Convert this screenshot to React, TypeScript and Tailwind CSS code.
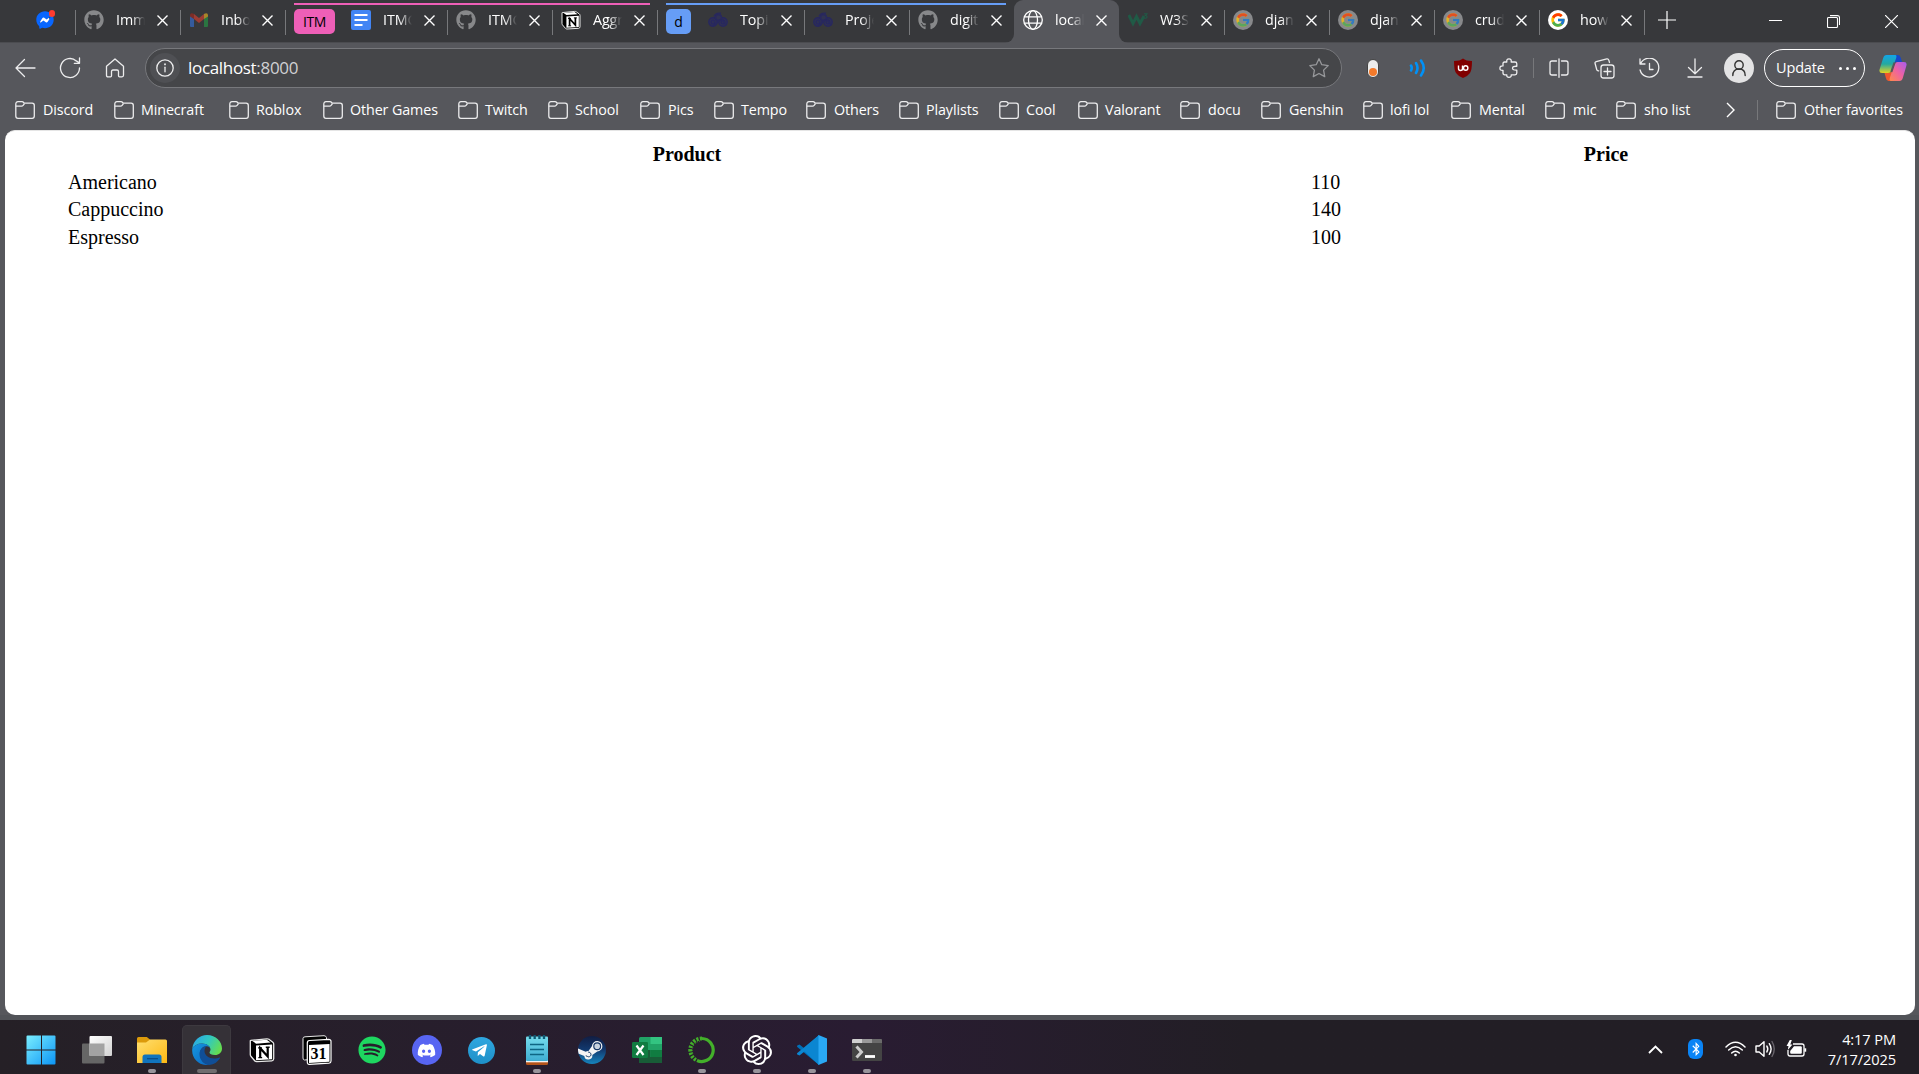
import React from "react";
import {
  FaGithub,
  FaFacebookMessenger,
  FaSpotify,
  FaDiscord,
  FaTelegramPlane,
  FaBluetoothB,
} from "react-icons/fa";
import { FcGoogle } from "react-icons/fc";
import { SiOpenai } from "react-icons/si";

type P = { children?: React.ReactNode };

function Line({ children, w = 20, vb = "0 0 20 20", sw = 1.3 }: P & { w?: number; vb?: string; sw?: number }) {
  return (
    <svg width={w} height={w} viewBox={vb} fill="none" stroke="currentColor" strokeWidth={sw} strokeLinecap="round" strokeLinejoin="round">
      {children}
    </svg>
  );
}

function NotionCube({ size }: { size: number }) {
  return (
    <svg width={size} height={size} viewBox="0 0 20 20">
      <path d="M1.200 2.600 13.700 1.400Q14.600 1.300 15.300 1.800L18.300 4Q19 4.500 19 5.400V16.800Q19 18.200 17.600 18.300L6 19Q5 19 4.400 18.300L1.600 15Q1 14.300 1 13.400V3Q1 2.600 1.200 2.600Z" fill="#000" stroke="#e9e9e9" strokeWidth="1" />
      <path d="M2.600 3 13.600 2.100 16.600 4.200 5.400 5.100Z" fill="#fff" />
      <path d="M5.400 6.500 17.800 5.700V17.100L5.400 17.800Z" fill="#fff" />
      <path d="M8.600 15.800V8.600L14.400 15V7.800" fill="none" stroke="#000" strokeWidth="1.700" />
      <path d="M7 8.400h3M12.900 7.900h3M7.200 15.800h2.900" stroke="#000" strokeWidth="1" />
    </svg>
  );
}

function DocsIcon() {
  return (
    <svg width="20" height="20" viewBox="0 0 20 20">
      <rect width="20" height="20" rx="2" fill="#4285f4" />
      <path d="M3.500 5h13M3.500 10h13M3.500 15h8" stroke="#fff" strokeWidth="2" />
    </svg>
  );
}

function GmailIcon() {
  return (
    <svg width="20" height="20" viewBox="0 0 20 20">
      <path d="M1 5.500V16Q1 17 2 17h3V8.500z" fill="#355b9d" />
      <path d="M19 5.500V16q0 1-1 1h-3V8.500z" fill="#2b7541" />
      <path d="M5 9V4l5 4 5-4v5l-5 4z" fill="#9c3c34" />
      <path d="M1 6.500V5q.3-2.500 3-1.500L5 4v5z" fill="#7c2d27" />
      <path d="M19 6.500V5q-.3-2.500-3-1.500L15 4v5z" fill="#a8852a" />
    </svg>
  );
}

function CloudKnot() {
  return (
    <svg width="20" height="20" viewBox="0 0 20 20" fill="none" stroke="#28285f" strokeWidth="1.400">
      <circle cx="5" cy="12" r="4.200" fill="#303153" />
      <circle cx="15" cy="12" r="4.200" fill="#303153" />
      <circle cx="5" cy="12" r="1.800" />
      <circle cx="15" cy="12" r="1.800" />
      <circle cx="10.500" cy="7.500" r="3" fill="#303153" />
      <path d="M2 15.500q4 1 8-4t8 4M6 6.500Q7.500 2.500 13 3.300" />
    </svg>
  );
}

function GlobeIcon() {
  return (
    <Line>
      <circle cx="10" cy="10" r="9.300" />
      <ellipse cx="10" cy="10" rx="4.500" ry="9.300" />
      <path d="M1.500 6.800h17M1.500 13.200h17" />
    </Line>
  );
}

function W3Icon() {
  return (
    <svg width="20" height="20" viewBox="0 0 20 20" fill="none" stroke="#205a46">
      <path d="M.8 5 5 13.500 8.500 6.500 12 13.500 16 6" strokeWidth="3" />
      <path d="M16 3.800h3l-1.700 1.700q2 .2 1.700 1.800-.6 1.400-3 .8" strokeWidth="1.100" />
    </svg>
  );
}

function GoogleIcon({ dim }: { dim?: boolean }) {
  return (
    <div className={dim ? "flex size-5 items-center justify-center rounded-full bg-[#88898b]" : "flex size-5 items-center justify-center rounded-full bg-white"}>
      <FcGoogle size={16} className={dim ? "opacity-75" : ""} />
    </div>
  );
}

function Git() {
  return <FaGithub size={20} color="#87888a" />;
}

function Tab({ icon, title, active, noSep }: { icon: React.ReactNode; title: string; active?: boolean; noSep?: boolean }) {
  return (
    <div className={active ? "relative flex h-[43px] w-[105px] shrink-0 rounded-t-[9px] bg-[#56575c] text-white" : "relative flex h-[43px] w-[105px] shrink-0"}>
      {active && (
        <>
          <div className="absolute bottom-0 -left-2.5 size-2.5 overflow-hidden">
            <div className="size-full rounded-br-[9px] shadow-[5px_5px_0_5px_#56575c]" />
          </div>
          <div className="absolute -right-2.5 bottom-0 size-2.5 overflow-hidden">
            <div className="size-full rounded-bl-[9px] shadow-[-5px_5px_0_5px_#56575c]" />
          </div>
        </>
      )}
      <div className="mt-2.5 ml-[9px] h-5 w-5 shrink-0">{icon}</div>
      <div className="mt-[9px] ml-3 h-6 w-[29px] shrink-0 overflow-hidden text-[14.300px] leading-[22px] tracking-[-0.1px] whitespace-nowrap text-white [mask-image:linear-gradient(to_right,black_55%,transparent)]">
        {title}
      </div>
      <svg className="mt-[15px] ml-3 shrink-0" width="11" height="11" viewBox="0 0 11 11" stroke="#fff" strokeWidth="1.400">
        <path d="M.5.5l10 10M10.500.5l-10 10" />
      </svg>
      {!noSep && <div className="absolute top-[10px] -right-px h-[25px] w-px bg-[#77787b]" />}
    </div>
  );
}

function Folder() {
  return (
    <svg width="20" height="18" viewBox="0 0 20 18" fill="none" stroke="#ececed" strokeWidth="1.300" strokeLinejoin="round">
      <path d="M.8 3.200Q.8.700 3 .700h4q1 0 1.600.8l.5.700h8q2.200 0 2.200 2.200v10.700q0 2.200-2.200 2.200H3q-2.200 0-2.200-2.200z" />
      <path d="M.8 5.200h5.700q1 0 1.600-.8l1.400-1.700" />
    </svg>
  );
}

const bookmarks: [string, string, string][] = [
  ["Discord", "w-[99px]", "ml-2"],
  ["Minecraft", "w-[115px]", "ml-[7px]"],
  ["Roblox", "w-[94px]", "ml-[7px]"],
  ["Other Games", "w-[135px]", "ml-[7px]"],
  ["Twitch", "w-[90px]", "ml-[7px]"],
  ["School", "w-[92px]", "ml-[7px]"],
  ["Pics", "w-[74px]", "ml-2"],
  ["Tempo", "w-[92px]", "ml-[7px]"],
  ["Others", "w-[93px]", "ml-2"],
  ["Playlists", "w-[100px]", "ml-[7px]"],
  ["Cool", "w-[79px]", "ml-[7px]"],
  ["Valorant", "w-[102px]", "ml-[7px]"],
  ["docu", "w-[81px]", "ml-2"],
  ["Genshin", "w-[102px]", "ml-2"],
  ["lofi lol", "w-[88px]", "ml-[7px]"],
  ["Mental", "w-[94px]", "ml-2"],
  ["mic", "w-[71px]", "ml-2"],
  ["sho list", "w-[110px]", "ml-2"],
];

function TabStrip() {
  return (
    <div className="relative flex h-[43px] border-b border-[#4b4c50] bg-[#37383b]">
      <div className="relative h-[43px] w-[76px] shrink-0">
        <div className="absolute top-4 left-[40px] size-2.5 rounded-full bg-white" />
        <FaFacebookMessenger size={18} color="#0866ff" className="relative mt-[11px] ml-9" />
        <div className="absolute top-2.5 left-[48.500px] size-[6.500px] rounded-full bg-[#ff3b30]" />
        <div className="absolute top-[10px] right-0 h-[25px] w-px bg-[#77787b]" />
      </div>
      <div className="-ml-px flex">
        <Tab icon={<Git />} title="Imm" />
        <Tab icon={<GmailIcon />} title="Inbo" />
      </div>
      <div className="mt-[9px] ml-[9px] flex h-[25px] w-[41px] shrink-0 items-center justify-center rounded-[5px] bg-[#ee5fb7] text-[14px] tracking-[-0.4px] text-black">ITM</div>
      <div className="ml-[7px] flex">
        <Tab icon={<DocsIcon />} title="ITMG" />
        <Tab icon={<Git />} title="ITMG" />
        <Tab icon={<NotionCube size={20} />} title="Aggr" />
      </div>
      <div className="mt-[9px] ml-[9px] flex h-[25px] w-[25px] shrink-0 items-center justify-center rounded-[5px] bg-[#669df6] text-[14px] text-black">d</div>
      <div className="ml-[8px] flex">
        <Tab icon={<CloudKnot />} title="Topic" />
        <Tab icon={<CloudKnot />} title="Proje" />
        <Tab icon={<Git />} title="digit" noSep />
        <Tab icon={<GlobeIcon />} title="local" active noSep />
        <Tab icon={<W3Icon />} title="W3S" />
        <Tab icon={<GoogleIcon dim />} title="djan" />
        <Tab icon={<GoogleIcon dim />} title="djan" />
        <Tab icon={<GoogleIcon dim />} title="crud" />
        <Tab icon={<GoogleIcon />} title="how" />
      </div>
      <svg className="mt-[11px] ml-[14px]" width="18" height="18" viewBox="0 0 18 18" stroke="#fff" strokeWidth="1.200">
        <path d="M9 0v18M0 9h18" />
      </svg>
      <div className="ml-auto flex pr-[21px] text-white">
        <svg className="mt-5 mr-[45px]" width="13" height="2" viewBox="0 0 13 2"><path d="M0 .5h13" stroke="#fff" /></svg>
        <svg className="mt-[15px] mr-[45px]" width="13" height="13" viewBox="0 0 13 13" fill="none" stroke="#fff" strokeWidth="1.100">
          <rect x=".5" y="2.500" width="10" height="10" rx="1" />
          <path d="M3 .6h7.500q2 0 2 2V10" />
        </svg>
        <svg className="mt-[15px]" width="13" height="13" viewBox="0 0 13 13" stroke="#fff" strokeWidth="1.200"><path d="M0 0l13 13M13 0L0 13" /></svg>
      </div>
      <div className="absolute top-[3px] left-[294px] h-0.5 w-[356px] bg-[#ee5fb7]" />
      <div className="absolute top-[3px] left-[666px] h-0.5 w-[340px] bg-[#669df6]" />
    </div>
  );
}

function Toolbar() {
  return (
    <div className="flex h-[50px] items-center pl-[14px] text-[#ededee]">
      <Line w={22} vb="0 0 22 22"><path d="M21 11H2M10.500 2.500 2 11l8.500 8.500" /></Line>
      <div className="ml-[23px]">
        <Line w={22} vb="0 0 22 22"><path d="M20.500 11a9.500 9.500 0 1 1-3.200-7.100L20.500 6M20.500 1v5.300h-5.200" /></Line>
      </div>
      <div className="ml-6">
        <Line w={20} vb="0 0 20 20"><path d="M1.500 8.300 10 .9l8.500 7.400v9q0 1.500-1.500 1.500h-2.500q-1 0-1-1v-4.300q0-1.500-1.500-1.500h-4q-1.500 0-1.500 1.500v4.300q0 1-1 1H3q-1.500 0-1.500-1.500z" /></Line>
      </div>
      <div className="ml-5 flex h-[40px] w-[1197px] items-center rounded-full border border-[#77787c] bg-[#454649] pr-3 pl-1">
        <div className="flex size-[30px] items-center justify-center rounded-full bg-[#4f5054]">
          <Line w={18} vb="0 0 18 18"><circle cx="9" cy="9" r="8.200" /><path d="M9 8.200v4.600" /><path d="M9 5.200v.2" strokeWidth="1.800" /></Line>
        </div>
        <span className="ml-2 text-[17px] tracking-[-0.32px] text-white">localhost<span className="text-[#d0d1d3]">:8000</span></span>
        <div className="ml-auto text-[#97989b]">
          <Line><path d="m10 .8 2.800 5.900 6.400.9-4.600 4.500 1.100 6.500-5.700-3.100-5.700 3.100 1.100-6.500L.8 7.600l6.400-.9z" /></Line>
        </div>
      </div>
      <div className="ml-[25px] h-[19px] w-[12px] rounded-full border border-[#444] bg-[#ececec] pt-[8px]">
        <div className="mx-auto size-2 rounded-full bg-[#f47a2a]" />
      </div>
      <svg className="ml-[30px]" width="17" height="18" viewBox="0 0 17 18" fill="none" stroke="#0091f7" strokeWidth="2.600" strokeLinecap="round">
        <path d="M2 6.500q1.500 2.500 0 5M7 4q3 5 0 10M12 1.500q5.500 7.500 0 15" />
      </svg>
      <svg className="ml-[27px]" width="20" height="20" viewBox="0 0 20 20">
        <path d="M10 .5Q13 3 19 3q0 9-2 12-2 3-7 5-5-2-7-5Q1 12 1 3q6 0 9-2.500" fill="#800000" />
        <path d="M5.500 7.500v3q0 2 2 2t2-2v-3M9.500 12.500v-3" fill="none" stroke="#fff" strokeWidth="1.400" />
        <circle cx="12.700" cy="10" r="2.200" fill="none" stroke="#fff" strokeWidth="1.400" />
      </svg>
      <div className="ml-[26px]">
        <Line><path d="M5.500 4h2.300Q7.300.9 10 .9T12.200 4H16q1.800 0 1.800 1.800v2.500q-4.300-.3-4.300 1.900t4.300 1.900V15q0 1.800-1.800 1.800h-3.800q.4 2.500-2.200 2.500t-2.200-2.500H5.700Q4 16.800 4 15v-2.700Q.9 12.700.9 10.200T4 7.900V5.500Q4 4 5.500 4z" /></Line>
      </div>
      <div className="ml-[14px] h-5 w-px bg-[#77787b]" />
      <div className="ml-[15px]">
        <Line><path d="M7.500 3H3Q1 3 1 5v10q0 2 2 2h4.500M12.500 3h4.500q2 0 2 2v10q0 2-2 2h-4.500M10 .8v18.500" /></Line>
      </div>
      <div className="ml-[25px]">
        <Line w={21} vb="0 0 21 21"><rect x="7" y="7" width="13" height="13" rx="2.500" /><path d="M13.500 10v7M10 13.500h7M15.500 4.500l-.7-2.400q-.5-1.500-2-1.200L2.200 3.600Q.7 4 1.100 5.500l1.600 6q.4 1.500 2 1.300" /></Line>
      </div>
      <div className="ml-[24px]">
        <Line w={21} vb="0 0 21 21"><path d="M1 1v5h5M1.500 6a9.500 9.500 0 1 1-.4 6M10.500 5.500v6H14" /></Line>
      </div>
      <div className="ml-[25px]">
        <Line><path d="M10 1v14.500M3.500 9.500l6.500 6.300 6.500-6.300M3 19h14" /></Line>
      </div>
      <div className="ml-[19px] flex size-[30px] items-center justify-center rounded-full bg-[#e3e3e4] text-[#333]">
        <Line w={18} vb="0 0 18 18" sw={1.4}><circle cx="9" cy="6" r="4.200" /><path d="M2.800 16.500q0-6.500 6.200-6.500t6.200 6.500" /></Line>
      </div>
      <div className="ml-2.5 flex h-[38px] w-[101px] items-center rounded-full border-[1.500px] border-white pl-[11px] text-[14.500px] tracking-[-0.15px] text-white">
        Update
        <div className="ml-[14px] flex gap-[4px]">
          <i className="size-[3px] rounded-full bg-white" />
          <i className="size-[3px] rounded-full bg-white" />
          <i className="size-[3px] rounded-full bg-white" />
        </div>
      </div>
      <CopilotIcon />
    </div>
  );
}

function CopilotIcon() {
  return (
    <svg className="ml-[14px] shrink-0" width="28" height="28" viewBox="0 0 28 28">
      <defs>
        <linearGradient id="cpA" x1="0" y1="0" x2="0" y2="1"><stop offset="0" stopColor="#12a5e8" /><stop offset=".5" stopColor="#24a9a0" /><stop offset="1" stopColor="#e6d421" /></linearGradient>
        <linearGradient id="cpB" x1="1" y1="0" x2="0" y2="1"><stop offset="0" stopColor="#a65cf0" /><stop offset=".5" stopColor="#ee62a2" /><stop offset="1" stopColor="#ff8b4a" /></linearGradient>
      </defs>
      <path d="M14 1h5q2 0 2.800 3l1.200 4h-5q-3 0-4 3z" fill="#1647c9" />
      <path d="M14 27H9.500q-2 0-2.600-3L5.500 19H9q3 0 4-2l2 3z" fill="#f0582c" />
      <path d="M7.500 1h8.800Q18 1 17.200 4L13 15.500q-1 3.500-4 3.500H3q-3.500 0-2.300-4L4.200 4Q5 1 7.500 1z" fill="url(#cpA)" />
      <path d="M20.500 27h-8.800Q10 27 10.800 24L15 11.500Q16 8 19 8h6q3.500 0 2.300 4l-3.500 12q-.8 3-3.300 3z" fill="url(#cpB)" />
      <path d="M15.600 8.500 12.300 18" stroke="#56575c" strokeWidth="2.200" />
    </svg>
  );
}

function Favorites() {
  return (
    <div className="flex h-[37px] items-center pb-[3px] pl-[15px] text-[14.300px] tracking-[-0.1px] whitespace-nowrap text-white">
      {bookmarks.map(([name, width, gap]) => (
        <div key={name} className={`${width} flex shrink-0 items-center`}>
          <Folder />
          <span className={gap}>{name}</span>
        </div>
      ))}
      <svg width="9" height="16" viewBox="0 0 9 16" fill="none" stroke="#fff" strokeWidth="1.400"><path d="M1 1l7 7-7 7" /></svg>
      <div className="ml-[22px] h-5 w-px bg-[#77787b]" />
      <div className="ml-[18px] flex items-center">
        <Folder />
        <span className="ml-2">Other favorites</span>
      </div>
    </div>
  );
}

const rows = [["Americano", "110"], ["Cappuccino", "140"], ["Espresso", "100"]];

function ProductPage() {
  return (
    <main className="mr-1 ml-[5px] h-[885px] rounded-[10px] border-t border-[#e5e5e5] bg-white pt-[10px] pl-[62px] font-['Liberation_Serif',serif] text-[20px] leading-[27.500px] text-black">
      <div className="grid grid-cols-[1240px_598px] text-center font-bold">
        <div>Product</div>
        <div>Price</div>
      </div>
      {rows.map(([name, price]) => (
        <div key={name} className="grid grid-cols-[1243px_592px] pl-px">
          <div>{name}</div>
          <div>{price}</div>
        </div>
      ))}
    </main>
  );
}

function WindowsIcon() {
  return (
    <svg width="30" height="30" viewBox="0 0 30 30">
      <defs><linearGradient id="win" x1="0" y1="0" x2="30" y2="30" gradientUnits="userSpaceOnUse"><stop stopColor="#7cf0ff" /><stop offset="1" stopColor="#0a93f5" /></linearGradient></defs>
      <path d="M1.500.5H15v14H.5v-13q0-1 1-1zM16 .5h12.500q1 0 1 1v13H16zM.5 15.500H15v14H1.500q-1 0-1-1zM16 15.500h13.500v13q0 1-1 1H16z" fill="url(#win)" />
    </svg>
  );
}

function TaskViewIcon() {
  return (
    <svg width="30" height="30" viewBox="0 0 30 30">
      <defs><linearGradient id="tv" x1="0" y1="0" x2="1" y2="1"><stop stopColor="#fff" /><stop offset="1" stopColor="#d2d2d2" /></linearGradient></defs>
      <rect x="0" y="8.500" width="22.500" height="20" rx="1" fill="#666" />
      <rect x="7.500" y="1" width="22.500" height="20" rx="1" fill="url(#tv)" />
      <path d="M7.500 8.500h15V21h-15z" fill="#a3a3a3" />
    </svg>
  );
}

function ExplorerIcon() {
  return (
    <svg width="30" height="30" viewBox="0 0 30 30">
      <defs><linearGradient id="ex" x1="0" y1="0" x2="1" y2="1"><stop stopColor="#ffdf70" /><stop offset="1" stopColor="#fdb813" /></linearGradient></defs>
      <path d="M0 9V3.500Q0 2 1.500 2h8.300L13 4.500V9z" fill="#dc9a0b" />
      <path d="M0 7.500h9L13 4.500h15.500q1.500 0 1.500 1.500V28H0z" fill="url(#ex)" />
      <path d="M5.500 28v-6q0-2.500 2.500-2.500h14q2.500 0 2.500 2.500v6z" fill="#1174bd" />
      <path d="M10 23.700h11" stroke="#0a4a86" strokeWidth="1.200" />
    </svg>
  );
}

function EdgeIcon() {
  return (
    <svg width="30" height="30" viewBox="0 0 30 30">
      <defs>
        <linearGradient id="eg" x1="0" y1=".2" x2="1" y2=".6"><stop stopColor="#2ba5e8" /><stop offset=".5" stopColor="#31c8c0" /><stop offset="1" stopColor="#66de4e" /></linearGradient>
        <linearGradient id="eb" x1="0" y1="0" x2="1" y2="1"><stop stopColor="#1697e0" /><stop offset="1" stopColor="#0a65c0" /></linearGradient>
      </defs>
      <path d="M.3 13.500C1.300 5.500 7.500 0 15 0c9 0 15 6.500 15 13.500 0 4-3 6.500-7 6.500-3.500 0-5.500-1.300-5.500-2.500 0-.8 1-1.200 1-3 0-3-3.500-6-8.500-6-4.500 0-8 2-9.700 5z" fill="url(#eg)" />
      <path d="M.3 13.500C2 10.500 5.500 8.500 10 8.500c5 0 8.500 3 8.500 6 0-2-1.500-3.300-4-3.300C10.500 11.200 8 14.500 8 19c0 5.500 4 10 9.500 10.800C8 31.500-1 24 .3 13.500z" fill="url(#eb)" />
      <path d="M14.500 11.200C10.500 11.200 7.500 15 7.500 19c0 6 4.500 11 10 11 4.500-.5 8-3 10.500-6.800.3-.7-.3-1-.8-.7-1.200.6-3 1-4.700 1-6 0-10-3.500-10-7.500 0-2.500 1-4 2-4.800z" fill="#104e96" />
    </svg>
  );
}

function CalendarIcon() {
  return (
    <div className="relative size-[30px]">
      <svg width="30" height="30" viewBox="0 0 30 30" className="absolute inset-0">
        <path d="M3 1.800 22 .7q2 0 2.500 2V23L2.500 25Q1 25 1 23V3.500q0-1.600 2-1.700z" fill="#000" stroke="#e8e8e8" />
        <path d="M7.500 5.500 26.500 4.300q2.500 0 2.500 2V26q0 2-2 2.200L7.500 29.400Q5.300 29.500 5.300 27V8q0-2.400 2.200-2.500z" fill="#000" stroke="#fff" strokeWidth="1.200" />
        <path d="M7 10 27.500 9V26.800L7 28z" fill="#fff" />
      </svg>
      <span className="absolute top-[9px] left-[9px] font-['Liberation_Serif',serif] text-[16px] leading-[20px] font-bold text-black">31</span>
    </div>
  );
}

function NotepadIcon() {
  return (
    <svg width="22" height="30" viewBox="0 0 22 30">
      <defs><linearGradient id="np" x1="0" y1="0" x2="0" y2="1"><stop stopColor="#75dcec" /><stop offset="1" stopColor="#3faed2" /></linearGradient></defs>
      <path d="M0 25h22v3.500q0 1.500-1.500 1.500h-19Q0 30 0 28.500z" fill="#b3541a" />
      <path d="M0 24h22v3.300H0z" fill="#f3f3f3" />
      <rect y="1.500" width="22" height="24.500" rx="1" fill="url(#np)" />
      <path d="M4 9.500h14M4 14.500h14M4 19.500h14" stroke="#0e6683" strokeWidth="1.600" />
      <path d="M4 0v4M8.700 0v4M13.400 0v4M18 0v4" stroke="#0d5973" strokeWidth="2.300" />
    </svg>
  );
}

function SteamIcon() {
  return (
    <svg width="28" height="28" viewBox="0 0 28 28">
      <defs><linearGradient id="st" x1="0" y1="0" x2="0" y2="1"><stop stopColor="#111d42" /><stop offset=".5" stopColor="#123a70" /><stop offset="1" stopColor="#1685be" /></linearGradient></defs>
      <circle cx="14" cy="14" r="14" fill="url(#st)" />
      <path d="M0 12.500 7.700 15.700q1.300-.8 2.800-.7L14 10a5.200 5.200 0 1 1 5.300 5.400l-5 3.500A4 4 0 0 1 6.300 20L.7 17.700Q-.2 15 0 12.500z" fill="#f4f4f4" />
      <circle cx="19.200" cy="10.200" r="3.400" fill="#c9d3df" stroke="#173765" strokeWidth="1.200" />
      <path d="m7.800 19.700 1.800.8a2.300 2.300 0 1 0 1.300-4.300l-.8-.1" fill="none" stroke="#1a3c68" strokeWidth="1" />
    </svg>
  );
}

function ExcelIcon() {
  return (
    <svg width="30" height="28" viewBox="0 0 30 28">
      <path d="M8.500 1h21.500v26H7V2.500Q7 1 8.500 1z" fill="#21a366" />
      <path d="M18.500 1H30v7H18.500z" fill="#33c481" />
      <path d="M7 14h11.500v7H7z" fill="#185c37" />
      <path d="M18.500 14H30v7H18.500z" fill="#107c41" />
      <path d="M7 21h23v6H7z" fill="#185c37" />
      <rect y="6" width="16" height="16" rx="1.300" fill="#107c41" />
      <path d="m4.500 9.500 7 9.500M11.500 9.500l-7 9.500" stroke="#fff" strokeWidth="2.200" />
    </svg>
  );
}

function AnacondaIcon() {
  return (
    <svg width="28" height="28" viewBox="0 0 28 28" fill="none" stroke="#43b02a">
      <path d="M14 2.500a11.500 11.500 0 1 1-5 22" strokeWidth="3.200" />
      <path d="M14 2.500A11.500 11.500 0 0 0 9 24.500" strokeWidth="3.800" strokeDasharray="2.200 1.300" />
      <path d="M12 5A9.500 9.500 0 0 0 5 18" strokeWidth="1" strokeDasharray="1 1.500" />
    </svg>
  );
}

function CodeIcon() {
  return (
    <svg width="30" height="30" viewBox="0 0 30 30">
      <path d="M22 0 7.500 13.500 2.500 9.500.3 10.500Q-.3 11.300.3 12L22 30V21.500z" fill="#0070b8" />
      <path d="M22 30 7.500 16.500 2.500 20.500.3 19.500Q-.3 18.700.3 18L22 0v8.500z" fill="#0b86d1" />
      <path d="M21.500 0 30 3.500v23L21.500 30z" fill="#2aa9f5" />
    </svg>
  );
}

function TerminalIcon() {
  return (
    <svg width="30" height="22" viewBox="0 0 30 22">
      <rect width="30" height="22" rx="1.300" fill="#444" />
      <path d="M1.200 0H10v4H0V1.200Q0 0 1.200 0z" fill="#d0d0d0" />
      <path d="M10 0h10v4H10z" fill="#999" />
      <path d="M20 0h8.800Q30 0 30 1.200V4H20z" fill="#6b6b6b" />
      <path d="m4.500 7.500 5 5.500-5 5.500" fill="none" stroke="#ccc" strokeWidth="3" />
      <path d="M13 17.500h10" stroke="#fff" strokeWidth="2.800" />
    </svg>
  );
}

const apps: { id: string; icon: React.ReactNode; open?: boolean; active?: boolean }[] = [
  { id: "start", icon: <WindowsIcon /> },
  { id: "taskview", icon: <TaskViewIcon /> },
  { id: "explorer", icon: <ExplorerIcon />, open: true },
  { id: "edge", icon: <EdgeIcon />, active: true },
  { id: "notion", icon: <NotionCube size={26} /> },
  { id: "calendar", icon: <CalendarIcon /> },
  { id: "spotify", icon: <FaSpotify size={28} color="#1ed760" /> },
  { id: "discord", icon: <div className="flex size-[30px] items-center justify-center rounded-full bg-[#5865f2]"><FaDiscord size={19} color="#fff" /></div> },
  { id: "telegram", icon: <div className="flex size-[27px] items-center justify-center rounded-full bg-gradient-to-b from-[#2fa7e0] to-[#1e90c8]"><FaTelegramPlane size={17} color="#fff" className="-ml-1" /></div> },
  { id: "notepad", icon: <NotepadIcon />, open: true },
  { id: "steam", icon: <SteamIcon /> },
  { id: "excel", icon: <ExcelIcon /> },
  { id: "anaconda", icon: <AnacondaIcon />, open: true },
  { id: "openai", icon: <SiOpenai size={30} color="#fff" />, open: true },
  { id: "code", icon: <CodeIcon />, open: true },
  { id: "terminal", icon: <TerminalIcon />, open: true },
];

function Taskbar() {
  return (
    <div className="flex h-[54px] bg-gradient-to-r from-[#252026] via-[#291c32] via-45% to-[#221e25] to-65% pl-[13px] text-white">
      {apps.map((a) => (
        <div key={a.id} className="relative flex h-[54px] w-[55px] shrink-0 items-center justify-center pt-1.5 first:mr-px">
          {a.active && <div className="absolute inset-x-[3px] top-[5px] bottom-0 rounded-t-[5px] border border-b-0 border-[#3d393f] bg-[#353137]" />}
          <div className="relative">{a.icon}</div>
          {a.open && <div className="absolute bottom-px left-6 h-1 w-2 rounded-full bg-[#98949b]" />}
          {a.active && <div className="absolute bottom-px left-[18px] h-1 w-5 rounded-full bg-[#706d6f]" />}
        </div>
      ))}
      <div className="ml-auto flex items-center pt-1 pr-[23px]">
        <svg width="15" height="9" viewBox="0 0 15 9" fill="none" stroke="#fff" strokeWidth="1.800"><path d="m1 8 6.500-6.500L14 8" /></svg>
        <div className="ml-[25px] flex h-5 w-[15px] items-center justify-center rounded-[6px] bg-[#0a84f5]"><FaBluetoothB size={14} color="#fff" /></div>
        <svg className="ml-[22px]" width="21" height="16" viewBox="0 0 21 16" fill="none" stroke="#fff" strokeWidth="1.500" strokeLinecap="round">
          <path d="M1 6Q10.500-3.500 20 6M3.700 9Q10.500 2.500 17.300 9M6.700 12q3.800-3.600 7.600 0" />
          <circle cx="10.500" cy="14" r="1.300" fill="#fff" stroke="none" />
        </svg>
        <svg className="ml-[9px]" width="21" height="18" viewBox="0 0 21 18" fill="none" stroke="#fff" strokeWidth="1.400" strokeLinecap="round" strokeLinejoin="round">
          <path d="M1 6h3.200L9 1.700v14.600L4.200 12H1zM11.800 6q2 3 0 6M14.300 3.700q3.600 5.300 0 10.600" />
          <path d="M17 1.500q4.500 7.500 0 15" stroke="#69656c" />
        </svg>
        <svg className="ml-[10px]" width="21" height="18" viewBox="0 0 21 18" fill="none" stroke="#fff" strokeWidth="1.300">
          <path d="M7 4h9q2 0 2 2v8q0 2-2 2H4q-2 0-2-2v-4" />
          <path d="M8 6.200h6.800q1 0 1 1v5.600q0 1-1 1H5.200q-1 0-1-1V11z" fill="#fff" stroke="none" />
          <path d="M19.300 8.300v3.400" strokeWidth="1.800" />
          <path d="M3.800 0 .5 6h2L1.800 10 6.500 4.500H4.300L5.800 0z" fill="#fff" stroke="none" />
        </svg>
        <div className="w-[89px] text-right text-[14.600px] leading-5 tracking-[-0.1px]">
          <div>4:17 PM</div>
          <div>7/17/2025</div>
        </div>
      </div>
    </div>
  );
}

export default function App() {
  return (
    <div className="h-[1074px] w-[1919px] overflow-hidden bg-[#56575c] font-['Open_Sans','Noto_Sans',sans-serif]">
      <TabStrip />
      <Toolbar />
      <Favorites />
      <ProductPage />
      <div className="h-[5px] bg-[#515358]" />
      <Taskbar />
    </div>
  );
}
